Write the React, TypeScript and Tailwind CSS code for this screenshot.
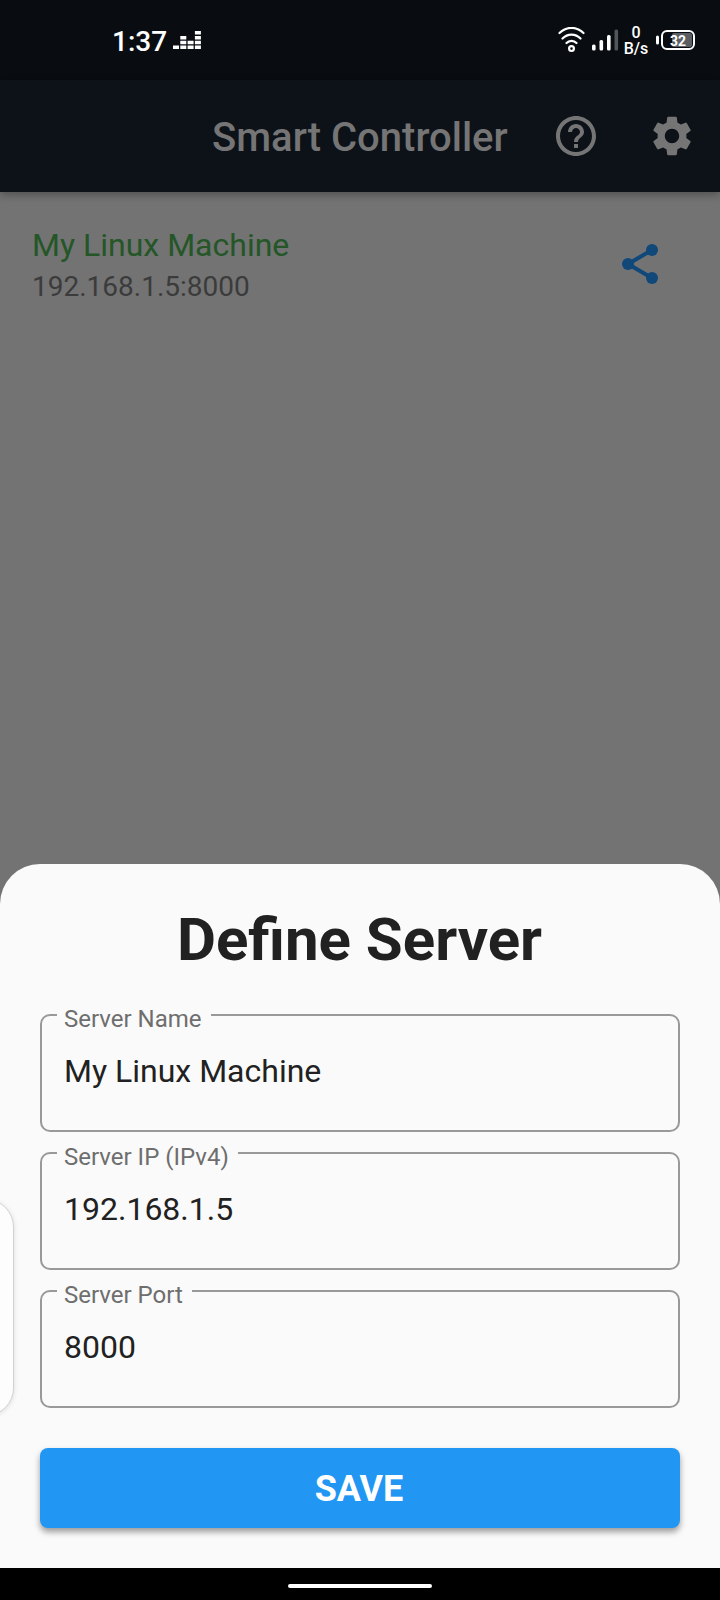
import { MdHelpOutline, MdSettings } from "react-icons/md";

function StatusBar() {
  return (
    <div className="flex h-20 shrink-0 items-center bg-[#090d12] pl-[112px] pr-[25px] text-white">
      <span className="pt-[3px] text-[28px] leading-[32px] font-medium">1:37</span>
      <svg className="ml-[6px] h-[18px] w-[28px]" viewBox="0 0 28 18" fill="currentColor">
        <path d="M0 14.5h6v3.5H0zM7.3 14.5h6v3.5h-6zM14.6 14.5h6v3.5h-6zM21.9 14.5h6v3.5h-6zM7.3 9.7h6v3.5h-6zM14.6 9.7h6v3.5h-6zM21.9 9.7h6v3.5h-6zM7.3 5h6v3.5h-6zM21.9 5h6v3.5h-6zM21.9 0h6v3.5h-6z" />
      </svg>
      <div className="ml-auto flex items-center">
        <svg className="h-[26px] w-[28px]" viewBox="0 0 28 26" fill="none" stroke="currentColor" strokeWidth="2.2" strokeLinecap="round">
          <path d="M1.5 6C8.5-.8 18.5-.8 25.500 6M4.500 11.500c5-5.200 13-5.200 18 0M8.500 16c2.700-2.900 7.300-2.900 10 0" />
          <circle cx="13.500" cy="21.600" r="2.400" />
        </svg>
        <svg className="ml-[6px] h-[22px] w-[27px]" viewBox="0 0 27 22" fill="currentColor">
          <rect x="0" y="15.500" width="3.600" height="6" rx="1.500" />
          <rect x="7.500" y="11" width="3.600" height="10.500" rx="1.500" />
          <rect x="15" y="6" width="3.600" height="15.500" rx="1.500" />
          <rect x="22.500" y="0.500" width="3.600" height="21" rx="1.500" opacity="0.300" />
        </svg>
        <div className="ml-[5px] flex w-[24px] flex-col items-center pt-px text-[16px] leading-[16px] font-medium">
          <span>0</span>
          <span>B/s</span>
        </div>
        <svg className="ml-[8px] h-[20px] w-[39px]" viewBox="0 0 39 20" fill="none">
          <rect x="0" y="5.500" width="3" height="9" rx="1.500" fill="white" />
          <rect x="16" y="3" width="20" height="14" rx="2" fill="#5b5e62" />
          <rect x="6" y="1" width="32" height="18" rx="5" stroke="white" strokeWidth="2" />
          <text x="22" y="15.500" textAnchor="middle" fontSize="15.500" fontWeight="700" textLength="16" lengthAdjust="spacingAndGlyphs" fill="white">32</text>
        </svg>
      </div>
    </div>
  );
}

function AppBar() {
  return (
    <header className="z-10 flex h-28 shrink-0 items-center bg-[#0d1219] pl-[212px] pr-6 text-[#757575] shadow-[0_3px_8px_rgba(0,0,0,0.3)]">
      <h1 className="pt-1 text-[40px] leading-[48px] font-medium whitespace-nowrap">Smart Controller</h1>
      <MdHelpOutline className="ml-auto size-12" />
      <MdSettings className="ml-12 size-12" />
    </header>
  );
}

function ShareIcon() {
  return (
    <svg className="mt-[14px] size-12 text-[#10487a]" viewBox="0 0 24 24" fill="currentColor">
      <path d="M18 5 6 12l12 7" fill="none" stroke="currentColor" strokeWidth="2" />
      <circle cx="18" cy="5" r="3" />
      <circle cx="6" cy="12" r="3" />
      <circle cx="18" cy="19" r="3" />
    </svg>
  );
}

function Field({ label, value }: { label: string; value: string }) {
  return (
    <div className="relative h-[118px] rounded-[10px] border-2 border-[#999999] pt-[36px] pl-[22px]">
      <span className="absolute -top-[11px] left-[15px] bg-[#fafafa] pr-[9px] pl-[7px] text-[24px] leading-[28px] whitespace-nowrap text-[#6e6e6e]">
        {label}
      </span>
      <div className="text-[32px] leading-[38px] text-[#212121]">{value}</div>
    </div>
  );
}

export default function App() {
  return (
    <div className="relative flex h-[1600px] w-[720px] flex-col overflow-hidden bg-[#737373] font-['Roboto',sans-serif]">
      <StatusBar />
      <AppBar />
      <main className="flex h-[672px] shrink-0 items-start justify-between pt-[34px] pr-14 pl-8">
        <div>
          <div className="text-[32px] leading-[38px] text-[#245627]">My Linux Machine</div>
          <div className="pt-[6px] text-[28px] leading-[34px] text-[#3b3b3b]">192.168.1.5:8000</div>
        </div>
        <ShareIcon />
      </main>
      <section className="h-[704px] shrink-0 rounded-t-[40px] bg-[#fafafa] px-10 pt-[41px]">
        <h2 className="pr-px text-center text-[60px] leading-[70px] font-bold text-[#212121]">Define Server</h2>
        <div className="mt-[39px] flex flex-col gap-5">
          <Field label="Server Name" value="My Linux Machine" />
          <Field label="Server IP (IPv4)" value="192.168.1.5" />
          <Field label="Server Port" value="8000" />
        </div>
        <button className="mt-10 flex h-20 w-full items-center justify-center rounded-lg bg-[#2196f3] pt-[2px] pr-[2px] text-[36px] font-bold text-white shadow-[0_4px_6px_rgba(0,0,0,0.38)]">
          SAVE
        </button>
      </section>
      <footer className="flex h-8 shrink-0 items-center justify-center bg-black pt-1">
        <div className="h-1 w-36 rounded-full bg-white" />
      </footer>
      <div className="absolute top-[1199px] -left-[46px] h-[217px] w-[60px] rounded-[28px] border border-[#d2d2d2] bg-[#fdfdfd] shadow-[0_1px_5px_rgba(0,0,0,0.12)]" />
    </div>
  );
}
